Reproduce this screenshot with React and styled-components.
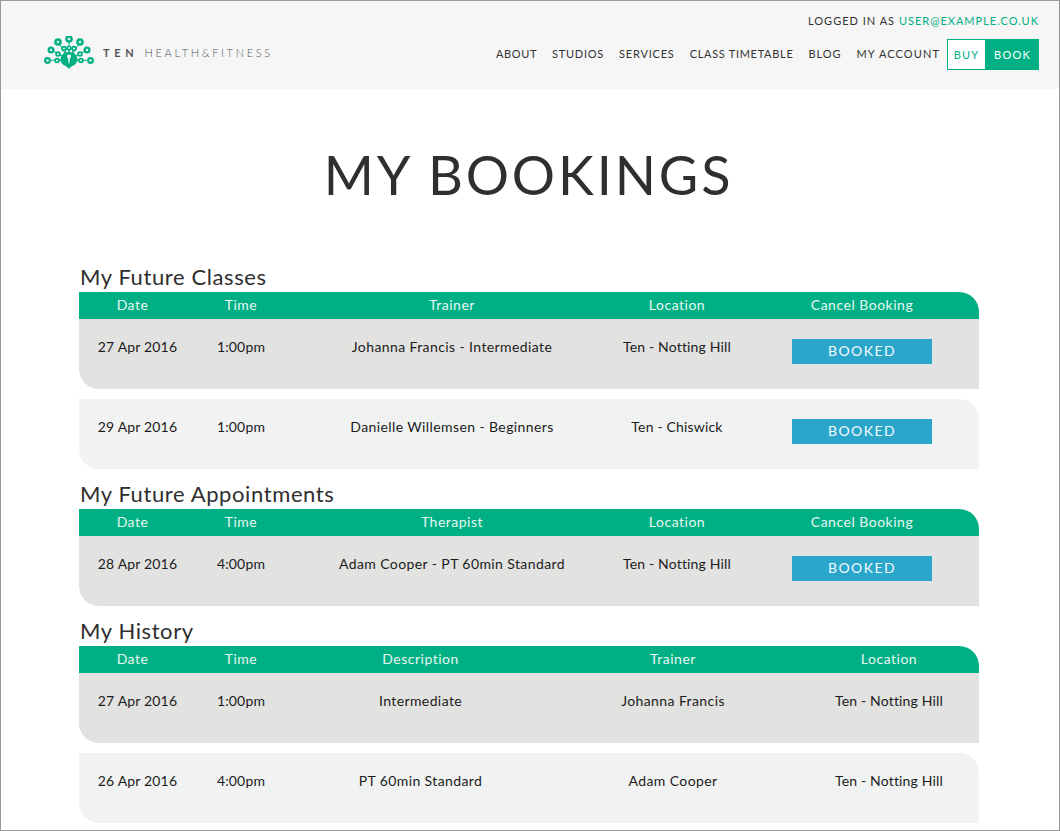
import React from "react";
import styled, { createGlobalStyle } from "styled-components";

const GlobalStyle = createGlobalStyle`
  * { box-sizing: border-box; }
  html, body { margin: 0; padding: 0; background: #fff; }
`;

const GREEN = "#00b084";
const HEAD_FONT = `"Lato", "Liberation Sans", sans-serif`;
const BODY_FONT = `"Lato", "Liberation Sans", sans-serif`;

const Page = styled.div`
  width: 1060px;
  height: 831px;
  border: 1px solid #999;
  overflow: hidden;
  background: #fff;
  font-family: ${BODY_FONT};
`;

const Header = styled.header`
  height: 88px;
  background: #f6f6f6;
  display: flex;
  justify-content: space-between;
  padding: 0 20px 0 43px;
`;

const Logo = styled.div`
  display: flex;
  align-items: center;
  height: 100%;
  padding-top: 15px;
  gap: 9px;
`;

const LogoText = styled.div`
  font-family: ${HEAD_FONT};
  font-size: 11px;
  color: #55555a;
  white-space: nowrap;
  letter-spacing: 2.7px;
  font-weight: 300;
`;

const LogoStrong = styled.span`
  font-weight: 700;
  color: #555557;
  letter-spacing: 4.7px;
  margin-right: 6px;
`;

const HeaderRight = styled.div`
  display: flex;
  flex-direction: column;
  align-items: flex-end;
`;

const LoggedIn = styled.div`
  font-family: ${HEAD_FONT};
  font-size: 11px;
  line-height: 14px;
  letter-spacing: 1px;
  color: #333;
  margin-top: 13px;
  margin-bottom: 11px;
  white-space: nowrap;
`;

const UserLink = styled.span`
  color: ${GREEN};
`;

const Nav = styled.nav`
  display: flex;
  align-items: center;
  gap: 15px;
`;

const NavItem = styled.span`
  font-family: ${HEAD_FONT};
  font-size: 11px;
  line-height: 14px;
  padding-bottom: 2px;
  letter-spacing: ${({ $track }) => $track}px;
  color: #333;
  white-space: nowrap;
`;

const Cta = styled.div`
  display: flex;
  height: 31px;
  margin-left: -8px;
`;

const CtaButton = styled.span`
  display: flex;
  align-items: center;
  justify-content: center;
  width: ${({ $w }) => $w}px;
  font-size: 11px;
  letter-spacing: 1.2px;
  border: 1px solid ${GREEN};
  color: ${({ $solid }) => ($solid ? "#fff" : GREEN)};
  background: ${({ $solid }) => ($solid ? GREEN : "#fff")};
`;

const Title = styled.h1`
  margin: 0;
  height: 163px;
  padding: 51px 3px 0 0;
  text-align: center;
  font-family: ${HEAD_FONT};
  font-weight: 400;
  font-size: 54px;
  line-height: 70px;
  letter-spacing: 2.9px;
  color: #2f2f2f;
`;

const Content = styled.main`
  margin: 0 80px 0 78px;
`;

const SectionTitle = styled.h2`
  margin: 0;
  height: 40px;
  padding: 12px 0 0 1px;
  font-family: ${HEAD_FONT};
  font-weight: 400;
  font-size: 22px;
  line-height: 26px;
  letter-spacing: 0.6px;
  color: #2f2f2f;
`;

const Grid = styled.div`
  display: grid;
  grid-template-columns: ${({ $cols }) => $cols};
  text-align: center;
`;

const HeadRow = styled(Grid)`
  height: 27px;
  background: ${GREEN};
  color: #e6f7f2;
  font-size: 14px;
  line-height: 25px;
  border-top-right-radius: 20px;
  letter-spacing: 0.5px;
`;

const Row = styled(Grid)`
  height: 70px;
  padding-top: 18px;
  font-size: 14px;
  line-height: 20px;
  letter-spacing: 0.4px;
  color: #1c1c1c;
  background: ${({ $odd }) => ($odd ? "#e2e2e0" : "#f1f3f2")};
  border-bottom-left-radius: 20px;
  border-top-right-radius: ${({ $odd }) => ($odd ? 0 : 20)}px;
  margin-bottom: ${({ $last }) => ($last ? 0 : 10)}px;

  & > :first-child {
    padding-left: 10px;
  }
`;

const TightCell = styled.div`
  letter-spacing: 0.17px;
`;

const BookedCell = styled.div`
  display: flex;
  justify-content: center;
`;

const Booked = styled.span`
  width: 140px;
  height: 25px;
  margin-top: 2px;
  background: #2ba6cb;
  color: #f2fafd;
  font-family: ${HEAD_FONT};
  font-size: 14px;
  line-height: 24px;
  letter-spacing: 1.4px;
`;

const BOOKING_COLS = "107px 110px 312px 138px 232px";
const HISTORY_COLS = "107px 110px 249px 256px 176px";

const PeacockLogo = () => {
  const eyes = [
    [25, 3.5, 3.8], [14, 6.5, 3.8], [36, 6.5, 3.8], [7, 14.5, 3.5], [43, 14.5, 3.5],
    [3.5, 25, 3.4], [46.5, 25, 3.4], [13, 25, 2.8], [37, 25, 2.8],
    [14, 18.5, 2.8], [36, 18.5, 2.8], [20, 13, 2.8], [30, 13, 2.8], [25, 12.5, 2.6],
  ];
  return (
    <svg width="50" height="34" viewBox="0 0.5 50 34" aria-hidden="true">
      <g stroke={GREEN} strokeWidth="1">
        {eyes.map(([x, y], i) => (
          <line key={i} x1="25" y1="24" x2={x} y2={y} />
        ))}
      </g>
      {eyes.map(([x, y, r], i) => (
        <g key={i}>
          <circle cx={x} cy={y} r={r} fill={GREEN} />
          <circle cx={x} cy={y} r={r * 0.36} fill="#dff3ed" />
        </g>
      ))}
      <path d="M25 16.5c5.6 0 8.4 3.6 8.4 7.6 0 4-3.6 6.2-5.8 6.8-.8.3-1.8 1.4-2.6 2.8-.8-1.4-1.8-2.5-2.6-2.8-2.2-.6-5.8-2.8-5.8-6.8 0-4 2.8-7.6 8.4-7.6z" fill={GREEN} />
      <path d="M25 19c1.3 0 2 .9 2 2 0 .8-.5 1.4-1 1.8l-.6 5.2h-.8l-.6-5.2c-.5-.4-1-1-1-1.8 0-1.1.7-2 2-2z" fill="#f6f6f6" />
    </svg>
  );
};

const NAV = [
  ["ABOUT", 0.6],
  ["STUDIOS", 0.75],
  ["SERVICES", 0.8],
  ["CLASS TIMETABLE", 0.7],
  ["BLOG", 0.95],
  ["MY ACCOUNT", 1.1],
];

const App = () => (
  <Page>
    <GlobalStyle />
    <Header>
      <Logo>
        <PeacockLogo />
        <LogoText>
          <LogoStrong>TEN</LogoStrong>HEALTH&amp;FITNESS
        </LogoText>
      </Logo>
      <HeaderRight>
        <LoggedIn>
          LOGGED IN AS <UserLink>USER@EXAMPLE.CO.UK</UserLink>
        </LoggedIn>
        <Nav>
          {NAV.map(([label, track]) => (
            <NavItem key={label} $track={track}>{label}</NavItem>
          ))}
          <Cta>
            <CtaButton $w={39}>BUY</CtaButton>
            <CtaButton $w={53} $solid>BOOK</CtaButton>
          </Cta>
        </Nav>
      </HeaderRight>
    </Header>

    <Title>MY BOOKINGS</Title>

    <Content>
      <SectionTitle>My Future Classes</SectionTitle>
      <HeadRow $cols={BOOKING_COLS}>
        <div>Date</div><div>Time</div><div>Trainer</div><div>Location</div><div>Cancel Booking</div>
      </HeadRow>
      <Row $cols={BOOKING_COLS} $odd>
        <TightCell>27 Apr 2016</TightCell><TightCell>1:00pm</TightCell><div>Johanna Francis - Intermediate</div><TightCell>Ten - Notting Hill</TightCell>
        <BookedCell><Booked>BOOKED</Booked></BookedCell>
      </Row>
      <Row $cols={BOOKING_COLS} $last>
        <TightCell>29 Apr 2016</TightCell><TightCell>1:00pm</TightCell><div>Danielle Willemsen - Beginners</div><TightCell>Ten - Chiswick</TightCell>
        <BookedCell><Booked>BOOKED</Booked></BookedCell>
      </Row>

      <SectionTitle>My Future Appointments</SectionTitle>
      <HeadRow $cols={BOOKING_COLS}>
        <div>Date</div><div>Time</div><div>Therapist</div><div>Location</div><div>Cancel Booking</div>
      </HeadRow>
      <Row $cols={BOOKING_COLS} $odd $last>
        <TightCell>28 Apr 2016</TightCell><TightCell>4:00pm</TightCell><div>Adam Cooper - PT 60min Standard</div><TightCell>Ten - Notting Hill</TightCell>
        <BookedCell><Booked>BOOKED</Booked></BookedCell>
      </Row>

      <SectionTitle>My History</SectionTitle>
      <HeadRow $cols={HISTORY_COLS}>
        <div>Date</div><div>Time</div><div>Description</div><div>Trainer</div><div>Location</div>
      </HeadRow>
      <Row $cols={HISTORY_COLS} $odd>
        <TightCell>27 Apr 2016</TightCell><TightCell>1:00pm</TightCell><div>Intermediate</div><div>Johanna Francis</div><TightCell>Ten - Notting Hill</TightCell>
      </Row>
      <Row $cols={HISTORY_COLS} $last>
        <TightCell>26 Apr 2016</TightCell><TightCell>4:00pm</TightCell><div>PT 60min Standard</div><div>Adam Cooper</div><TightCell>Ten - Notting Hill</TightCell>
      </Row>
    </Content>
  </Page>
);

export default App;
